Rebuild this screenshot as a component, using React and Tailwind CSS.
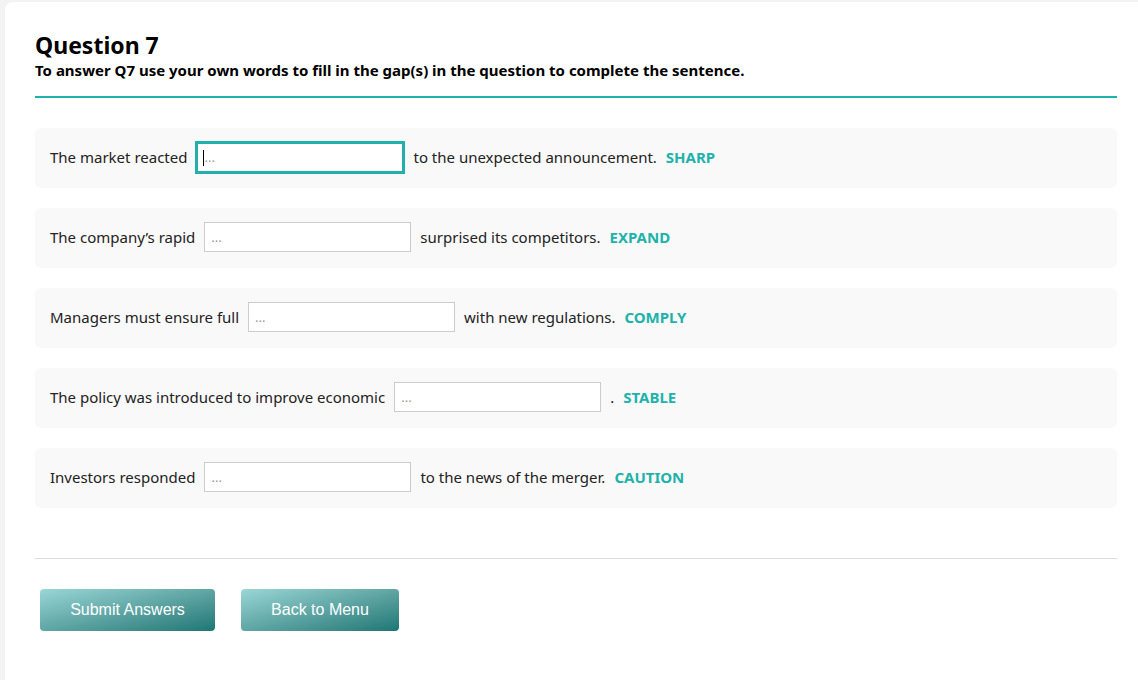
import React from 'react';

// Sentences for the gap-fill exercise
const items = [
  { before: 'The market reacted', after: 'to the unexpected announcement.', word: 'SHARP', focused: true },
  { before: 'The company\u2019s rapid', after: 'surprised its competitors.', word: 'EXPAND' },
  { before: 'Managers must ensure full', after: 'with new regulations.', word: 'COMPLY' },
  { before: 'The policy was introduced to improve economic', after: '.', word: 'STABLE' },
  { before: 'Investors responded', after: 'to the news of the merger.', word: 'CAUTION' },
];

function GapRow({ item }) {
  return (
    <div className="flex items-center h-[60px] px-[15px] pb-[2px] bg-[#f9f9f9] rounded-md text-[15px] text-[#222]">
      <span>{item.before}</span>
      {item.focused ? (
        <div className="relative mx-[8px]">
          <input
            placeholder="..."
            className="w-[210px] h-[33px] border-[3px] border-[#20b2aa] bg-white pl-[6px] text-[13px] outline-none placeholder:text-[#999]"
          />
          <span className="absolute left-[8px] top-[9px] w-px h-[16px] bg-black" />
        </div>
      ) : (
        <input
          placeholder="..."
          className="mx-[9px] w-[207px] h-[30px] border border-[#ccc] bg-white pl-[6px] text-[13px] outline-none placeholder:text-[#999]"
        />
      )}
      <span>{item.after}</span>
      <span className="ml-[9px] font-bold text-[#20b2aa]">{item.word}</span>
    </div>
  );
}

export default function App() {
  return (
    <div className="min-h-screen bg-[#f3f3f3] pl-[5px] pt-[2px] font-['Noto_Sans',sans-serif]">
      <div className="bg-white rounded-tl-lg min-h-[678px] pl-[30px] pr-[21px] pt-[28px]">
        <h1 className="text-[23px] font-bold leading-[30px] text-black">Question 7</h1>
        <p className="text-[15px] font-bold text-black leading-[20px]">
          To answer Q7 use your own words to fill in the gap(s) in the question to complete the sentence.
        </p>
        <div className="h-[2px] bg-[#20b2aa] mt-[16px]" />

        <div className="flex flex-col gap-[20px] mt-[30px]">
          {items.map((item, index) => (
            <GapRow key={index} item={item} />
          ))}
        </div>

        <div className="h-px bg-[#ddd] mt-[50px]" />

        <div className="flex gap-[26px] pl-[5px] mt-[30px] font-['Liberation_Sans',sans-serif]">
          <button className="w-[175px] h-[42px] rounded text-white text-[16px] bg-gradient-to-br from-[#9ad7d7] to-[#1b7775]">
            Submit Answers
          </button>
          <button className="w-[158px] h-[42px] rounded text-white text-[16px] bg-gradient-to-br from-[#9ad7d7] to-[#1b7775]">
            Back to Menu
          </button>
        </div>
      </div>
    </div>
  );
}
